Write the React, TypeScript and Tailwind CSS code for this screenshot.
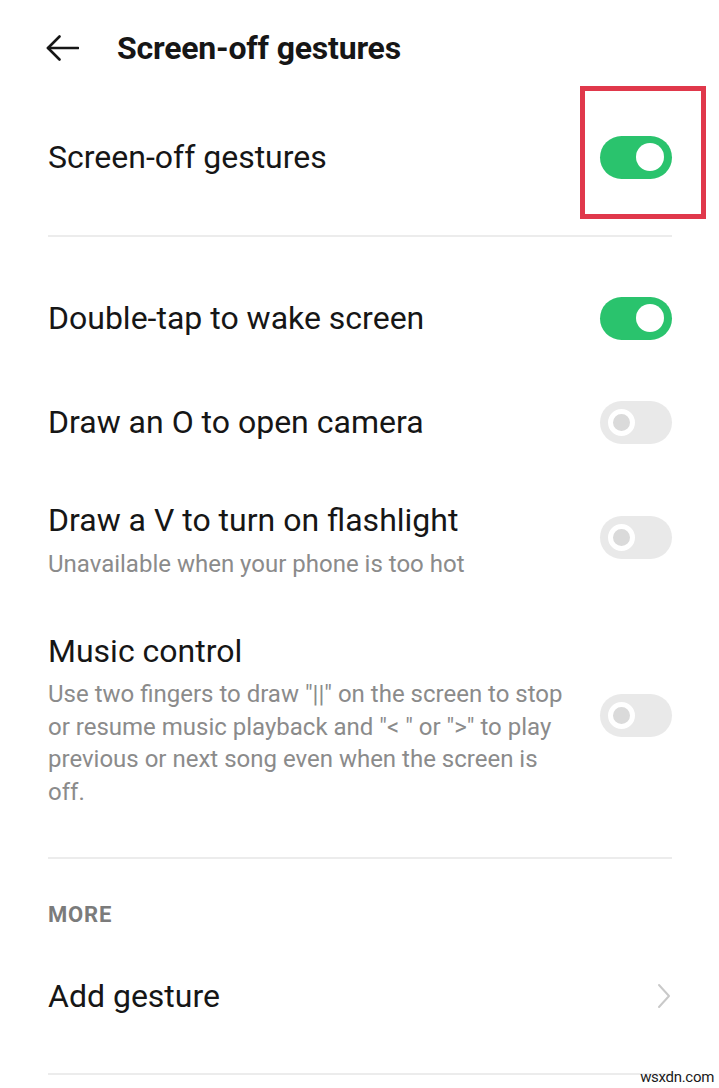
import React from 'react';

type ToggleProps = { on: boolean; className?: string };

const Toggle: React.FC<ToggleProps> = ({ on, className = '' }) => (
  <div
    className={`w-[72px] h-[43px] rounded-full flex items-center shrink-0 px-[8px] ${
      on ? 'bg-[#2ac36d] justify-end' : 'bg-[#e9e9e9] justify-start'
    } ${className}`}
  >
    {on ? (
      <div className="w-[28px] h-[28px] rounded-full bg-white" />
    ) : (
      <div className="w-[27px] h-[27px] rounded-full border-[5px] border-white bg-[#dadada]" />
    )}
  </div>
);

const Divider = ({ className = '' }: { className?: string }) => (
  <div className={`h-[2px] bg-[#ececec] ${className}`} />
);

export default function App() {
  return (
    <div className="relative w-[719px] h-[1088px] bg-white overflow-hidden font-['Roboto',sans-serif] text-[#161616]">
      {/* Header */}
      <div className="h-[96px] flex items-center pl-[46px]">
        <svg width="33" height="26" viewBox="0 0 33 26" fill="none" stroke="#161616" strokeWidth="2.6" strokeLinecap="round" strokeLinejoin="round">
          <path d="M2 13 H32" />
          <path d="M13.5 1.5 L2 13 L13.5 24.5" />
        </svg>
        <h1 className="ml-[38px] text-[32px] leading-[38px] font-bold tracking-[-0.2px]">Screen-off gestures</h1>
      </div>

      <div className="pl-[48px] pr-[47px]">
        {/* Master switch */}
        <div className="h-[122px] flex items-center justify-between">
          <span className="text-[32px] leading-[38px]">Screen-off gestures</span>
          <div className="relative">
            <Toggle on />
            <div className="absolute left-[-20px] top-[-50px] w-[126px] h-[133px] border-[5px] border-[#e0384b]" />
          </div>
        </div>
        <Divider className="mt-[17px]" />

        <div className="mt-[29px] h-[104px] flex items-center justify-between">
          <span className="text-[32px] leading-[38px]">Double-tap to wake screen</span>
          <Toggle on />
        </div>

        <div className="h-[104px] flex items-center justify-between">
          <span className="text-[32px] leading-[38px]">Draw an O to open camera</span>
          <Toggle on={false} />
        </div>

        <div className="pt-[27px] pb-[28px] flex items-center justify-between">
          <div>
            <div className="text-[32px] leading-[38px]">Draw a V to turn on flashlight</div>
            <div className="mt-[9px] text-[24px] leading-[32px] text-[#8b8b8b]">Unavailable when your phone is too hot</div>
          </div>
          <Toggle on={false} className="mb-[6px]" />
        </div>

        <div className="pt-[24px] pb-[25px] flex items-center justify-between gap-[20px]">
          <div className="w-[530px]">
            <div className="text-[32px] leading-[38px]">Music control</div>
            <div className="mt-[8px] text-[24px] leading-[32.5px] text-[#8b8b8b]">
              Use two fingers to draw "||" on the screen to stop or resume music playback and "&lt; " or "&gt;" to play previous or next song even when the screen is off.
            </div>
          </div>
          <Toggle on={false} className="mb-[10px]" />
        </div>

        <Divider className="mt-[24px]" />

        <div className="mt-[44px] text-[22px] leading-[24px] font-bold text-[#7b7b7b] tracking-[0.8px]">MORE</div>

        <div className="mt-[50px] h-[38px] flex items-center justify-between">
          <span className="text-[32px] leading-[38px]">Add gesture</span>
          <svg width="14" height="26" viewBox="0 0 14 26" fill="none" stroke="#c9c9c9" strokeWidth="2" strokeLinecap="round" strokeLinejoin="round" className="mr-[1px]">
            <path d="M2 2 L12 13 L2 24" />
          </svg>
        </div>

        <Divider className="mt-[58px]" />
      </div>

      <div className="absolute right-[5px] bottom-[2px] text-[15px] leading-[18px] text-[#1a1a1a] font-['Liberation_Sans_Narrow','Roboto',sans-serif] tracking-[-0.3px]">
        wsxdn.com
      </div>
    </div>
  );
}
